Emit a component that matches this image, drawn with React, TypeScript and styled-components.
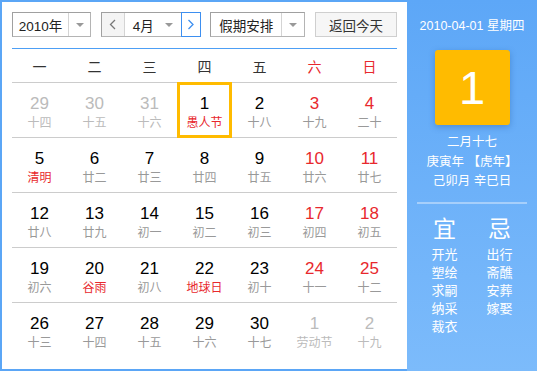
import React from 'react';
import styled, { createGlobalStyle } from 'styled-components';

const GlobalStyle = createGlobalStyle`
  html, body {
    margin: 0;
    padding: 0;
    background: #ffffff;
  }
  body {
    font-family: 'Liberation Sans', 'Noto Sans CJK SC', sans-serif;
  }
`;

type Tone = 'normal' | 'weekend' | 'other' | 'festival';

type Day = {
  num: number;
  lunar: string;
  other?: boolean;
  festival?: boolean;
  selected?: boolean;
};

const weeks: Day[][] = [
  [
    { num: 29, lunar: '十四', other: true },
    { num: 30, lunar: '十五', other: true },
    { num: 31, lunar: '十六', other: true },
    { num: 1, lunar: '愚人节', festival: true, selected: true },
    { num: 2, lunar: '十八' },
    { num: 3, lunar: '十九' },
    { num: 4, lunar: '二十' },
  ],
  [
    { num: 5, lunar: '清明', festival: true },
    { num: 6, lunar: '廿二' },
    { num: 7, lunar: '廿三' },
    { num: 8, lunar: '廿四' },
    { num: 9, lunar: '廿五' },
    { num: 10, lunar: '廿六' },
    { num: 11, lunar: '廿七' },
  ],
  [
    { num: 12, lunar: '廿八' },
    { num: 13, lunar: '廿九' },
    { num: 14, lunar: '初一' },
    { num: 15, lunar: '初二' },
    { num: 16, lunar: '初三' },
    { num: 17, lunar: '初四' },
    { num: 18, lunar: '初五' },
  ],
  [
    { num: 19, lunar: '初六' },
    { num: 20, lunar: '谷雨', festival: true },
    { num: 21, lunar: '初八' },
    { num: 22, lunar: '地球日', festival: true },
    { num: 23, lunar: '初十' },
    { num: 24, lunar: '十一' },
    { num: 25, lunar: '十二' },
  ],
  [
    { num: 26, lunar: '十三' },
    { num: 27, lunar: '十四' },
    { num: 28, lunar: '十五' },
    { num: 29, lunar: '十六' },
    { num: 30, lunar: '十七' },
    { num: 1, lunar: '劳动节', other: true },
    { num: 2, lunar: '十九', other: true },
  ],
];

const weekDays = ['一', '二', '三', '四', '五', '六', '日'];
const yi = ['开光', '塑绘', '求嗣', '纳采', '裁衣'];
const ji = ['出行', '斋醮', '安葬', '嫁娶'];

function Chevron({ dir, color }: { dir: 'left' | 'right'; color: string }) {
  const points = dir === 'left' ? '6,1 1.5,5.5 6,10' : '1.5,1 6,5.5 1.5,10';
  return (
    <svg width="8" height="11" viewBox="0 0 8 11">
      <polyline points={points} fill="none" stroke={color} strokeWidth="1.3" />
    </svg>
  );
}

export default function App() {
  return (
    <>
      <GlobalStyle />
      <Frame>
        <Main>
          <Toolbar>
            <SelectBox>
              <SelectText $width={55}>2010年</SelectText>
              <ArrowCell>
                <Caret />
              </ArrowCell>
            </SelectBox>
            <SelectBox>
              <NavButton>
                <Chevron dir="left" color="#777" />
              </NavButton>
              <MonthLabel>
                <span>4月</span>
                <Caret />
              </MonthLabel>
              <NavButton $active>
                <Chevron dir="right" color="#3d8ff0" />
              </NavButton>
            </SelectBox>
            <SelectBox>
              <SelectText $width={70}>假期安排</SelectText>
              <ArrowCell>
                <Caret />
              </ArrowCell>
            </SelectBox>
            <TodayButton>返回今天</TodayButton>
          </Toolbar>
          <BlueRule />
          <WeekHeader>
            {weekDays.map((d, i) => (
              <WeekDay key={d} $weekend={i >= 5}>
                {d}
              </WeekDay>
            ))}
          </WeekHeader>
          <Grid>
            {weeks.map((week, r) =>
              week.map((day, c) => {
                const weekend = c >= 5;
                const numTone: Tone = day.other ? 'other' : weekend ? 'weekend' : 'normal';
                const lunarTone: Tone = day.other
                  ? 'other'
                  : day.festival
                  ? 'festival'
                  : 'normal';
                return (
                  <DayCell
                    key={`${r}-${c}`}
                    $selected={!!day.selected}
                    $lastRow={r === weeks.length - 1}
                  >
                    <DayNum $tone={numTone}>{day.num}</DayNum>
                    <Lunar $tone={lunarTone}>{day.lunar}</Lunar>
                  </DayCell>
                );
              })
            )}
          </Grid>
        </Main>
        <Side>
          <SideDate>2010-04-01 星期四</SideDate>
          <BigDay>1</BigDay>
          <LunarInfo>
            <div>二月十七</div>
            <div>庚寅年 【虎年】</div>
            <div>己卯月 辛巳日</div>
          </LunarInfo>
          <SideRule />
          <YiJi>
            <YiJiColumn>
              <YiJiTitle>宜</YiJiTitle>
              {yi.map((t) => (
                <YiJiItem key={t}>{t}</YiJiItem>
              ))}
            </YiJiColumn>
            <YiJiColumn>
              <YiJiTitle>忌</YiJiTitle>
              {ji.map((t) => (
                <YiJiItem key={t}>{t}</YiJiItem>
              ))}
            </YiJiColumn>
          </YiJi>
        </Side>
      </Frame>
    </>
  );
}

const Frame = styled.div`
  width: 537px;
  height: 371px;
  box-sizing: border-box;
  border: 2px solid #5ba6f6;
  border-right: none;
  display: flex;
  background: #ffffff;
`;

const Main = styled.div`
  width: 405px;
  box-sizing: border-box;
  padding: 10px 10px 0;
  display: flex;
  flex-direction: column;
`;

const Toolbar = styled.div`
  display: grid;
  grid-template-columns: 79px 100px 95px 82px;
  justify-content: space-between;
  height: 25px;
`;

const SelectBox = styled.div`
  display: flex;
  box-sizing: border-box;
  height: 25px;
  border: 1px solid #b4b4b4;
  border-top-color: #a0a0a0;
  border-left-color: #a0a0a0;
  background: #ffffff;
  font-size: 13.5px;
  color: #222;
`;

const SelectText = styled.div<{ $width: number }>`
  width: ${(p) => p.$width}px;
  display: flex;
  align-items: center;
  justify-content: center;
  border-right: 1px solid #d4d4d4;
`;

const ArrowCell = styled.div`
  flex: 1;
  display: flex;
  align-items: center;
  justify-content: center;
`;

const Caret = styled.span`
  width: 0;
  height: 0;
  border-left: 4px solid transparent;
  border-right: 4px solid transparent;
  border-top: 4px solid #999;
`;

const NavButton = styled.div<{ $active?: boolean }>`
  width: ${(p) => (p.$active ? 18 : 22)}px;
  display: flex;
  align-items: center;
  justify-content: center;
  background: ${(p) => (p.$active ? '#ffffff' : '#f4f4f4')};
  border-right: ${(p) => (p.$active ? 'none' : '1px solid #d4d4d4')};
  outline: ${(p) => (p.$active ? '1px solid #3d8ff0' : 'none')};
  outline-offset: 0;
`;

const MonthLabel = styled.div`
  flex: 1;
  display: flex;
  align-items: center;
  justify-content: space-between;
  padding: 0 9px 0 8px;
`;

const TodayButton = styled.div`
  box-sizing: border-box;
  height: 25px;
  border: 1px solid #cfcfcf;
  background: #f6f6f6;
  font-size: 13.5px;
  color: #333;
  display: flex;
  align-items: center;
  justify-content: center;
`;

const BlueRule = styled.div`
  height: 1px;
  margin-top: 11px;
  background: #4d9ff5;
`;

const WeekHeader = styled.div`
  display: grid;
  grid-template-columns: repeat(7, 1fr);
  height: 33px;
  border-bottom: 1px solid #cccccc;
`;

const WeekDay = styled.div<{ $weekend: boolean }>`
  display: flex;
  align-items: center;
  justify-content: center;
  font-size: 14px;
  color: ${(p) => (p.$weekend ? '#e8282d' : '#333333')};
`;

const Grid = styled.div`
  display: grid;
  grid-template-columns: repeat(7, 1fr);
`;

const DayCell = styled.div<{ $selected: boolean; $lastRow: boolean }>`
  height: 55px;
  box-sizing: border-box;
  display: flex;
  flex-direction: column;
  align-items: center;
  padding-top: ${(p) => (p.$selected ? 9 : 11)}px;
  border-bottom: ${(p) => (p.$lastRow ? 'none' : '1px solid #cccccc')};
  ${(p) =>
    p.$selected &&
    `
    border: 3px solid #ffbb00;
    margin-top: -1px;
    height: 56px;
  `}
`;

const toneColor = (t: Tone, lunar: boolean) => {
  if (t === 'other') return '#bbbbbb';
  if (t === 'weekend' || t === 'festival') return '#e8282d';
  return lunar ? '#999999' : '#000000';
};

const DayNum = styled.div<{ $tone: Tone }>`
  font-family: 'Liberation Sans', Arial, sans-serif;
  font-size: 17px;
  line-height: 20px;
  color: ${(p) => toneColor(p.$tone, false)};
`;

const Lunar = styled.div<{ $tone: Tone }>`
  font-size: 12px;
  line-height: 16px;
  margin-top: 1px;
  color: ${(p) => toneColor(p.$tone, true)};
`;

const Side = styled.div`
  flex: 1;
  margin-top: -2px;
  margin-bottom: -2px;
  background: linear-gradient(#5da7f7, #7cbbfb);
  color: #ffffff;
  display: flex;
  flex-direction: column;
  align-items: center;
`;

const SideDate = styled.div`
  margin-top: 18px;
  font-size: 12.5px;
  line-height: 16px;
`;

const BigDay = styled.div`
  margin-top: 16px;
  width: 75px;
  height: 75px;
  border-radius: 3px;
  background: #ffbb00;
  box-shadow: 0 2px 6px rgba(30, 80, 150, 0.35);
  display: flex;
  align-items: center;
  justify-content: center;
  font-family: 'Liberation Sans', Arial, sans-serif;
  font-size: 47px;
`;

const LunarInfo = styled.div`
  margin-top: 8px;
  font-size: 12.5px;
  line-height: 19.5px;
  text-align: center;
`;

const SideRule = styled.div`
  width: 110px;
  height: 2px;
  margin-top: 10px;
  background: #a6cffb;
`;

const YiJi = styled.div`
  display: grid;
  grid-template-columns: 50px 50px;
  column-gap: 5px;
  margin-top: 12px;
`;

const YiJiColumn = styled.div`
  display: flex;
  flex-direction: column;
  align-items: center;
`;

const YiJiTitle = styled.div`
  font-size: 23px;
  line-height: 26px;
  margin-bottom: 4px;
`;

const YiJiItem = styled.div`
  font-size: 13px;
  line-height: 18px;
`;
